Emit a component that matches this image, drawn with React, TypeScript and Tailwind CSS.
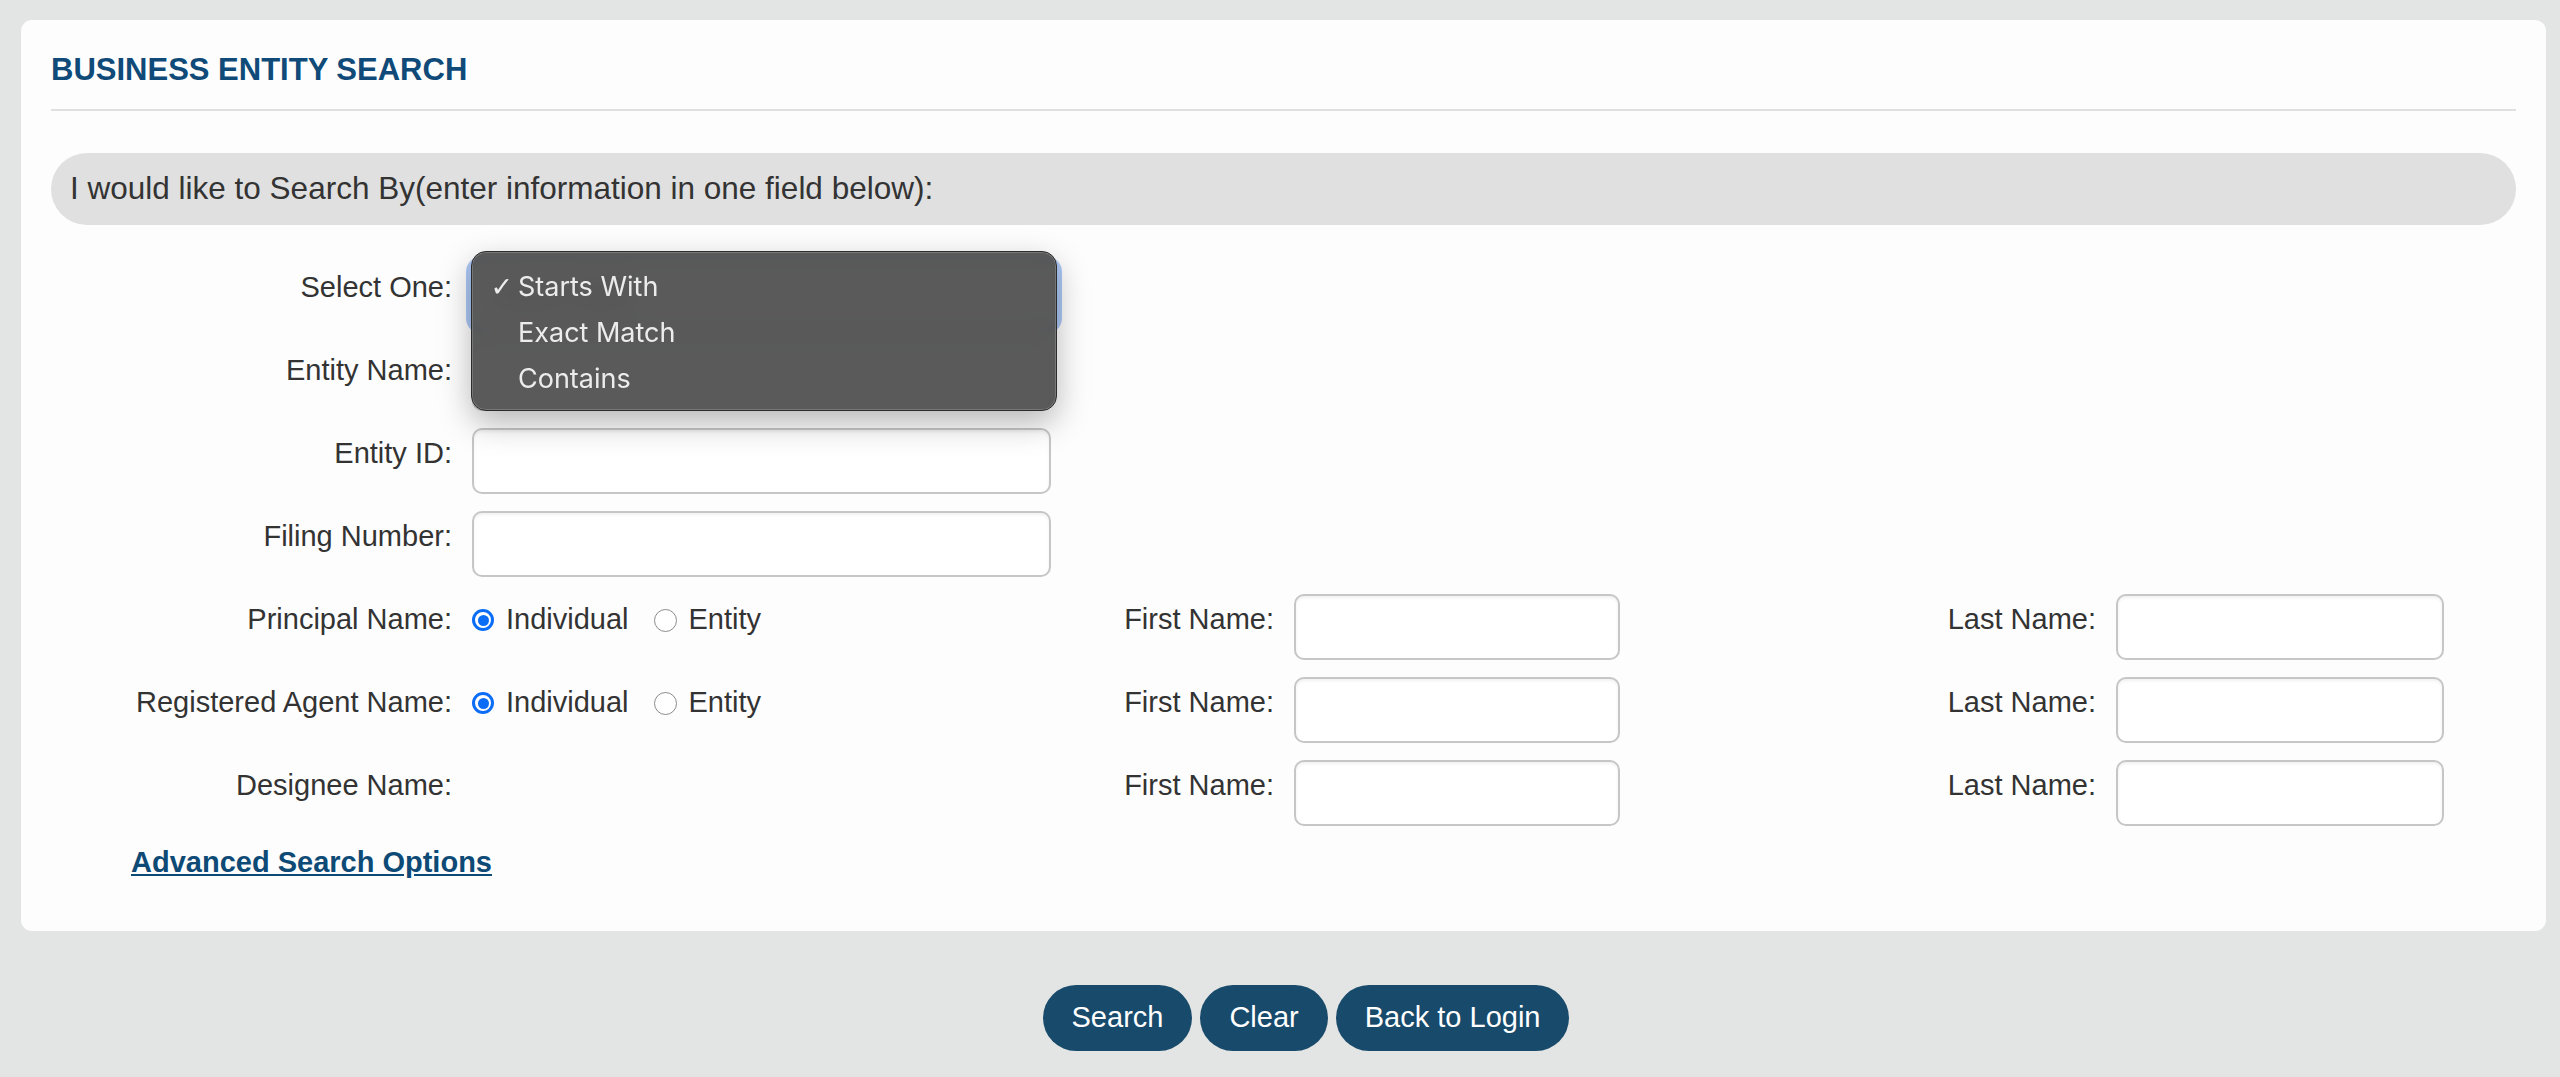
import React from 'react';

const font = { fontFamily: '"Liberation Sans", Arial, Helvetica, sans-serif' };

const Label: React.FC<{ children: React.ReactNode }> = ({ children }) => (
  <div className="flex items-center justify-end pb-[14px] text-[29px] text-[#333333] whitespace-nowrap">{children}</div>
);

const TextBox: React.FC = () => (
  <input
    type="text"
    className="h-[66px] w-full rounded-[10px] border-2 border-[#c6c6c6] bg-white px-3 text-[29px] shadow-[inset_0_2px_3px_rgba(0,0,0,0.06)] outline-none"
  />
);

const Radio: React.FC<{ checked?: boolean; label: string }> = ({ checked = false, label }) => (
  <label className="flex items-center">
    {checked ? (
      <span className="flex h-[22px] w-[22px] items-center justify-center rounded-full border-[3px] border-[#0b6df6] bg-white">
        <span className="h-[11px] w-[11px] rounded-full bg-[#0b6df6]" />
      </span>
    ) : (
      <span className="h-[23px] w-[23px] rounded-full border-[1.5px] border-[#8c8c8c] bg-white" />
    )}
    <span className="ml-[12px] text-[29px] text-[#333333]">{label}</span>
  </label>
);

const RadioPair: React.FC = () => (
  <div className="flex items-center gap-[25px] pb-[14px]">
    <Radio checked label="Individual" />
    <Radio label="Entity" />
  </div>
);

const NameFields: React.FC = () => (
  <>
    <Label>First Name:</Label>
    <TextBox />
    <Label>Last Name:</Label>
    <TextBox />
  </>
);

// open native-style select menu
const MatchMenu: React.FC = () => (
  <div className="absolute left-[-1px] top-[-11px] z-10 h-[160px] w-[586px] rounded-[15px] border border-[#2c2c2c] bg-[#4e4e4e]/[0.93] shadow-[0_12px_32px_rgba(0,0,0,0.28),inset_0_0_0_1px_rgba(255,255,255,0.18)] backdrop-blur-md">
    <ul className="pt-[12px] text-[27px] text-[#ececec]" style={{ fontFamily: 'Inter, "Liberation Sans", sans-serif' }}>
      <li className="flex h-[46px] items-center">
        <span className="w-[46px] pr-[5px] text-right text-[27px]" style={{ fontFamily: '"DejaVu Sans", sans-serif' }}>
          ✓
        </span>
        <span>Starts With</span>
      </li>
      <li className="flex h-[46px] items-center pl-[46px]">Exact Match</li>
      <li className="flex h-[46px] items-center pl-[46px]">Contains</li>
    </ul>
  </div>
);

export default function App() {
  return (
    <div className="min-h-screen bg-[#e3e5e4] pt-[20px]" style={font}>
      <div className="ml-[21px] mr-[14px] rounded-[11px] bg-[#fdfdfd] px-[30px] pt-[32px] pb-[52px]">
        <h1 className="h-[36px] text-[31px] font-bold leading-[36px] text-[#0f4a79]">BUSINESS ENTITY SEARCH</h1>
        <div className="mt-[21px] h-[2px] bg-[#e0e0e0]" />

        <div className="mt-[42px] flex h-[72px] items-center rounded-full bg-[#e0e0e0] pl-[19px] text-[31.5px] text-[#333333]">
          I would like to Search By(enter information in one field below):
        </div>

        <div className="mt-[37px] grid grid-cols-[401px_579px_203px_326px_456px_328px] auto-rows-[66px] gap-x-[20px] gap-y-[17px]">
          <Label>Select One:</Label>
          <div className="relative">
            <div className="flex h-[66px] w-[584px] items-center justify-between rounded-[10px] border-2 border-[#c6c6c6] bg-white px-4 text-[29px] text-[#333333] ring-[6px] ring-[#abc7f4]">
              <span>Starts With</span>
              <span className="text-[24px]">⌄</span>
            </div>
            <MatchMenu />
          </div>
          <div className="col-span-4" />

          <Label>Entity Name:</Label>
          <TextBox />
          <div className="col-span-4" />

          <Label>Entity ID:</Label>
          <TextBox />
          <div className="col-span-4" />

          <Label>Filing Number:</Label>
          <TextBox />
          <div className="col-span-4" />

          <Label>Principal Name:</Label>
          <RadioPair />
          <NameFields />

          <Label>Registered Agent Name:</Label>
          <RadioPair />
          <NameFields />

          <Label>Designee Name:</Label>
          <div />
          <NameFields />
        </div>

        <a href="#" className="mt-[19px] ml-[80px] inline-block text-[29px] font-bold leading-[34px] text-[#0e4a76] underline">
          Advanced Search Options
        </a>
      </div>

      <div className="flex justify-center gap-[8px] pl-[52px] pt-[54px]">
        <button className="h-[66px] rounded-full bg-[#184a6b] px-[29px] text-[29px] text-white">Search</button>
        <button className="h-[66px] rounded-full bg-[#184a6b] px-[29px] text-[29px] text-white">Clear</button>
        <button className="h-[66px] rounded-full bg-[#184a6b] px-[29px] text-[29px] text-white">Back to Login</button>
      </div>
    </div>
  );
}
